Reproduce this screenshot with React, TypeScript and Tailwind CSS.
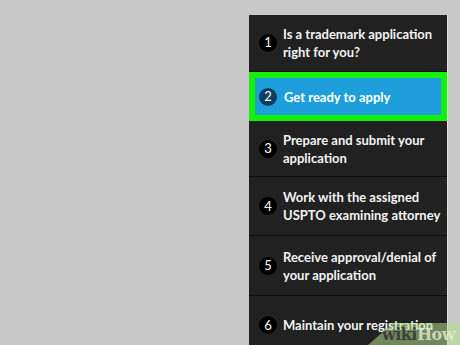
const steps = [
  { n: 1, text: ['Is a trademark application', 'right for you?'], h: 'h-[58px]' },
  { n: 2, text: ['Get ready to apply'], h: 'h-[50px]', active: true },
  { n: 3, text: ['Prepare and submit your', 'application'], h: 'h-[57px]' },
  { n: 4, text: ['Work with the assigned', 'USPTO examining attorney'], h: 'h-[60px]' },
  { n: 5, text: ['Receive approval/denial of', 'your application'], h: 'h-[61px]' },
  { n: 6, text: ['Maintain your registration'], h: 'h-[60px]' },
]

function StepRow({ n, text, h, active }: { n: number; text: string[]; h: string; active?: boolean }) {
  if (active) {
    return (
      <div className={`${h} border-[6px] border-[#14f00a] bg-[#1e9fdc] flex items-center pl-[4px]`}>
        <div className="w-[18px] h-[18px] rounded-full bg-[#0c3f5e] flex items-center justify-center text-[13px] text-white leading-none">
          {n}
        </div>
        <div className="ml-[7px] text-[13px] font-bold text-white leading-[18px]">{text[0]}</div>
      </div>
    )
  }
  return (
    <div className={`${h} border-b border-[#0e0e0e] flex items-center pl-[10px]`}>
      <div className="w-[18px] h-[18px] shrink-0 rounded-full bg-black flex items-center justify-center text-[13px] text-white leading-none">
        {n}
      </div>
      <div className="ml-[6px] text-[13px] font-bold text-[#f4f4f4] leading-[18px]">
        {text.map((t) => (
          <div key={t} className="whitespace-nowrap">{t}</div>
        ))}
      </div>
    </div>
  )
}

export default function App() {
  return (
    <div className="relative w-[460px] h-[345px] overflow-hidden bg-[#c8c8c8] pl-[249px] pt-[15px] font-['Lato',sans-serif]">
      <div className="w-[199px] h-[340px] bg-[#212121] flex flex-col border-r border-[#e2e2e2]">
        {steps.map((s) => (
          <StepRow key={s.n} {...s} />
        ))}
      </div>
      {/* watermark */}
      <div
        className="absolute right-0 bottom-0 w-[92px] h-[22px] bg-[#b5dc8e]/55 flex items-center justify-end pr-[5px] pt-[2px] font-['DejaVu_Serif',serif] font-bold text-[16px] leading-none tracking-[-0.5px]"
        style={{ clipPath: 'polygon(25px 0, 100% 0, 100% 100%, 0 100%)' }}
      >
        <span className="text-[#333]/85">wiki</span>
        <span className="text-[#e4eedb]/80">How</span>
      </div>
    </div>
  )
}
